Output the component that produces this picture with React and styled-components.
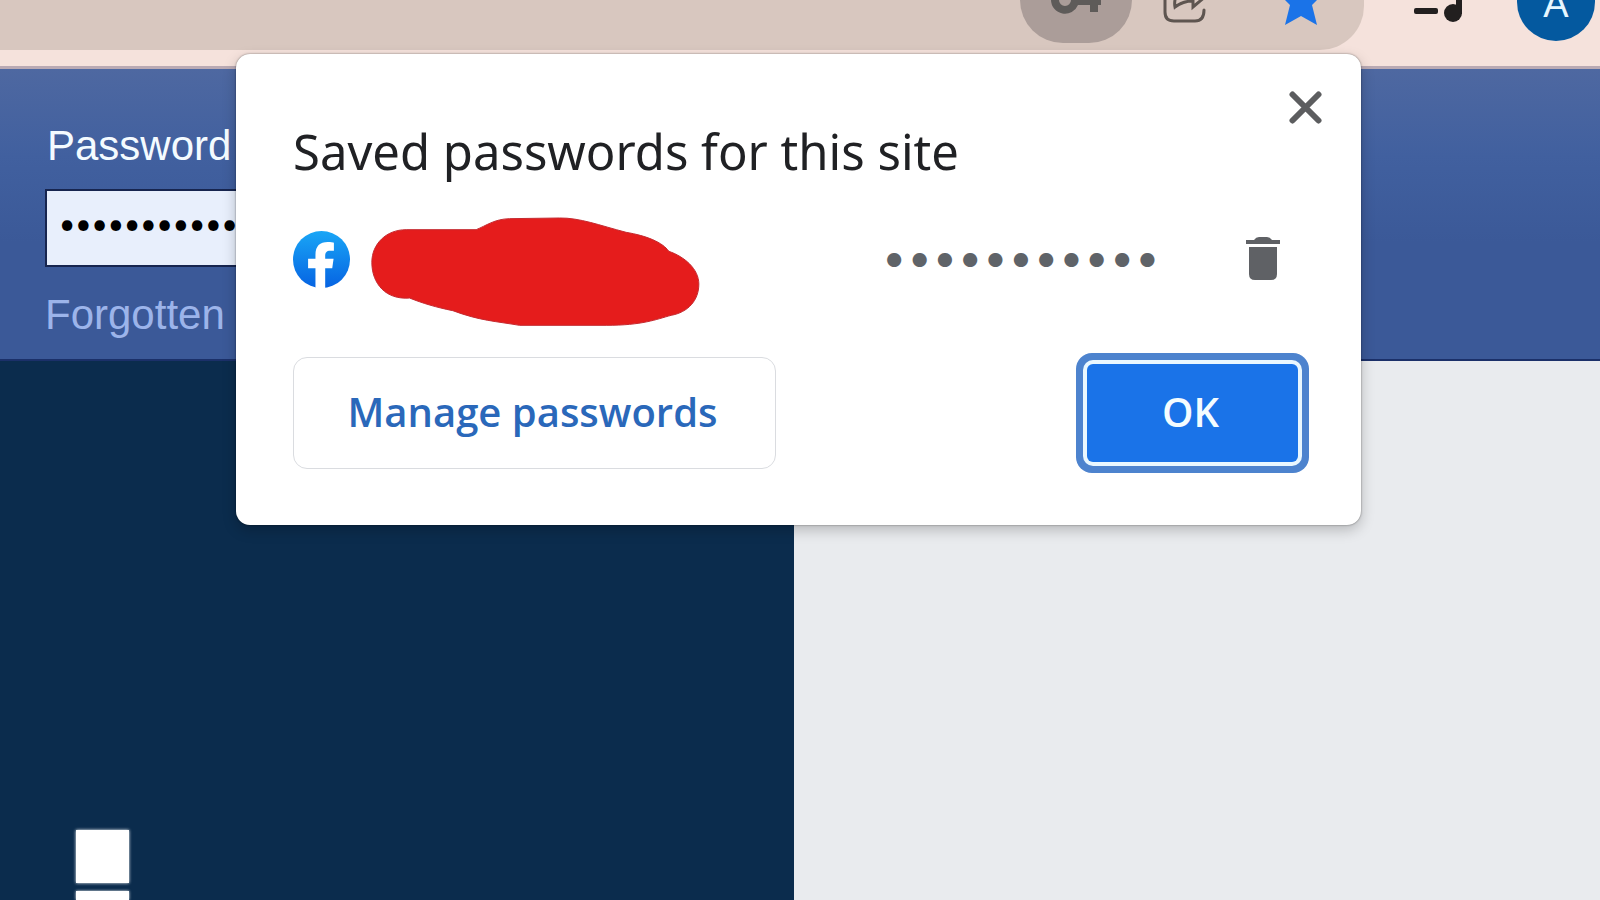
import React from "react";
import styled, { createGlobalStyle } from "styled-components";

const GlobalStyle = createGlobalStyle`
  *, *::before, *::after { box-sizing: border-box; }
  body { margin: 0; font-family: "Liberation Sans", Arial, sans-serif; }
  button { font: inherit; cursor: pointer; }
`;

const Page = styled.div`
  position: relative;
  display: flex;
  flex-direction: column;
  height: 100vh;
  overflow: hidden;
`;

const Toolbar = styled.header`
  display: flex;
  align-items: flex-start;
  height: 69px;
  flex: none;
  padding-right: 5px;
  background: #f5e2dc;
  border-bottom: 3px solid #b9a9b3;
`;

const Omnibox = styled.div`
  flex: 1;
  display: flex;
  justify-content: flex-end;
  align-items: flex-start;
  gap: 31px;
  height: 50px;
  padding-right: 42px;
  background: #d8c7bf;
  border-bottom-right-radius: 44px;
`;

const ToolButton = styled.button`
  display: block;
  padding: 0;
  border: 0;
  background: none;
  line-height: 0;
  margin-left: ${(p) => p.$space || 0}px;
`;

const KeyButton = styled(ToolButton)`
  display: flex;
  justify-content: center;
  width: 112px;
  height: 43px;
  background: #ab9d99;
  border-radius: 0 0 44px 44px;
`;

const Avatar = styled.button`
  display: flex;
  justify-content: center;
  width: 78px;
  height: 41px;
  margin-left: 54px;
  padding: 0;
  overflow: hidden;
  border: 0;
  border-radius: 0 0 39px 39px;
  background: #04599f;
  color: #e6f7ff;
  font-size: 38px;
  line-height: 8px;
`;

const SiteHeader = styled.section`
  display: flex;
  flex-direction: column;
  align-items: flex-start;
  flex: none;
  padding: 53px 45px 20px;
  background: linear-gradient(#4e68a1, #41609f 30%, #3b5998 60%);
  border-bottom: 2px solid #1b3069;
  font-size: 42px;
  line-height: 48px;
`;

const FieldLabel = styled.label`
  padding-left: 2px;
  color: #f4fbff;
`;

const PasswordField = styled.input`
  width: 400px;
  height: 78px;
  margin: 19px 0 24px;
  padding: 0 12px 10px;
  border: 2px solid #17254f;
  border-radius: 0;
  outline: 0;
  background: #e8effc;
  color: #000;
  font-family: Lato, sans-serif;
  font-size: 28px;
`;

const ForgottenLink = styled.a`
  color: #9cb4ea;
  text-decoration: none;
`;

const Content = styled.main`
  flex: 1;
  display: flex;
  min-height: 0;
  background: #e9ebee;
`;

const Banner = styled.div`
  display: flex;
  flex-direction: column;
  justify-content: flex-end;
  gap: 8px;
  width: calc(50% - 6px);
  padding-left: 76px;
  background: #0b2c4d;
`;

const Block = styled.div`
  width: 53px;
  height: ${(p) => p.$height}px;
  background: #fff;
  box-shadow: 0 0 3px #fff;
`;

const Dialog = styled.section`
  position: absolute;
  top: 54px;
  left: 236px;
  right: 239px;
  padding-bottom: 52px;
  background: #fff;
  border-radius: 14px;
  box-shadow: 0 0 2px rgba(0, 0, 0, 0.5), 0 5px 14px rgba(0, 0, 0, 0.22);
  font-family: "Noto Sans", "Open Sans", sans-serif;
`;

const DialogHeader = styled.div`
  display: flex;
  justify-content: space-between;
  align-items: flex-start;
  padding: 37px 39px 0 57px;
`;

const Title = styled.h1`
  margin: 29px 0 0;
  color: #202124;
  font-size: 49px;
  font-weight: 400;
  line-height: 62px;
`;

const Account = styled.div`
  display: flex;
  align-items: center;
  height: 84px;
  margin-top: 35px;
  padding: 0 81px 0 57px;
`;

const Redaction = styled.svg`
  align-self: flex-start;
  flex: none;
  margin-left: 21px;
`;

const SavedPassword = styled.span`
  margin-left: auto;
  padding-bottom: 4px;
  color: #5f6368;
  font-family: Inter, sans-serif;
  font-size: 45px;
  line-height: 48px;
`;

const DialogFooter = styled.div`
  display: flex;
  justify-content: space-between;
  align-items: center;
  margin-top: 52px;
  padding: 0 52px 0 57px;
  font-family: "Open Sans", "Noto Sans", sans-serif;
  font-size: 40px;
  font-weight: 600;
`;

const ManageButton = styled.button`
  width: 483px;
  height: 112px;
  padding: 0 4px 4px 0;
  border: 1px solid #dadce0;
  border-radius: 14px;
  background: #fff;
  color: #2a68ba;
`;

const OkButton = styled.button`
  width: 211px;
  height: 98px;
  margin: 11px;
  padding: 0 4px 4px 0;
  border: 0;
  border-radius: 6px;
  background: #1a73e8;
  color: #f4fcff;
  box-shadow: 0 0 0 4px #e9f7ff, 0 0 0 11px #4d83ce;
`;

function KeyIcon() {
  return (
    <svg width="56" height="16" viewBox="0 0 56 16" fill="#5e5b59" aria-hidden="true">
      <path fillRule="evenodd" d="M3 0a14 14 0 0 1 28 -4H53V5H50V12H42V5H30A14 14 0 0 1 3 0ZM11 0a6 6 0 0 0 12 0a6 6 0 0 0 -12 0Z" />
    </svg>
  );
}

function ShareIcon() {
  return (
    <svg width="43" height="24" viewBox="0 0 43 24" fill="none" stroke="#5e5550" strokeWidth="3" aria-hidden="true">
      <path d="M2 -10V12Q2 21 11 21H32Q41 21 41 10" strokeLinecap="round" />
      <path d="M13 -4Q11 2 12 7Q20 1 30 1V7L43 -4" />
    </svg>
  );
}

function StarIcon() {
  return (
    <svg width="42" height="27" viewBox="0 0 42 27" fill="#1a73e8" aria-hidden="true">
      <path d="M21 -19L27 -6L42 -5L32 5L37 25L21 16L5 25L10 5L0 -5L15 -6Z" />
    </svg>
  );
}

function MediaIcon() {
  return (
    <svg width="49" height="24" viewBox="0 0 49 24" fill="#221f1f" aria-hidden="true">
      <rect x="0" y="8" width="24" height="6" rx="2" />
      <circle cx="39" cy="13" r="9" />
      <rect x="42" y="-10" width="6" height="24" />
    </svg>
  );
}

function CloseIcon() {
  return (
    <svg width="33" height="33" viewBox="0 0 33 33" stroke="#5c5d5f" strokeWidth="6" strokeLinecap="round" aria-hidden="true">
      <path d="M3.500 3.500L29.500 29.500M29.500 3.500L3.500 29.500" />
    </svg>
  );
}

function FacebookIcon() {
  return (
    <svg width="57" height="57" viewBox="38 391 170 170" role="img" aria-label="Facebook">
      <defs>
        <linearGradient id="fb" x1="0" y1="0" x2="0" y2="1">
          <stop offset="0" stopColor="#19a6f6" />
          <stop offset="1" stopColor="#0663e2" />
        </linearGradient>
      </defs>
      <circle cx="123" cy="476" r="85" fill="url(#fb)" />
      <path fill="#fff" d="M105 562V502H83V474H105V462C105 436 118 424 142 424C151 424 160 426 160 426V450H149C138 450 134 456 134 465V474H159L155 502H134V562Z" />
    </svg>
  );
}

function TrashIcon() {
  return (
    <svg width="34" height="44" viewBox="0 0 34 44" fill="#5f6165" aria-hidden="true">
      <path d="M0 3H8Q10 0 13 0H21Q24 0 26 3H34V7H0Z" />
      <path d="M3 10H31V37Q31 43 25 43H9Q3 43 3 37Z" />
    </svg>
  );
}

export default function App() {
  return (
    <Page>
      <GlobalStyle />
      <Toolbar>
        <Omnibox>
          <KeyButton aria-label="Passwords"><KeyIcon /></KeyButton>
          <ToolButton aria-label="Share"><ShareIcon /></ToolButton>
          <ToolButton aria-label="Bookmark" $space={43}><StarIcon /></ToolButton>
        </Omnibox>
        <ToolButton aria-label="Media" $space={50}><MediaIcon /></ToolButton>
        <Avatar>A</Avatar>
      </Toolbar>
      <SiteHeader>
        <FieldLabel htmlFor="password">Password</FieldLabel>
        <PasswordField id="password" type="password" defaultValue="12345678901" />
        <ForgottenLink href="#forgotten">Forgotten</ForgottenLink>
      </SiteHeader>
      <Content>
        <Banner>
          <Block $height={53} />
          <Block $height={9} />
        </Banner>
      </Content>
      <Dialog role="dialog" aria-labelledby="dialog-title">
        <DialogHeader>
          <Title id="dialog-title">Saved passwords for this site</Title>
          <ToolButton aria-label="Close"><CloseIcon /></ToolButton>
        </DialogHeader>
        <Account>
          <FacebookIcon />
          <Redaction width="329" height="110" viewBox="275 349 986 330" aria-hidden="true">
            <path
              fill="#e51c1c"
              stroke="#c52a30"
              strokeWidth="3"
              d="M380 387L590 387C620 375 645 355 690 354L840 352C900 351 960 374 1040 395C1100 405 1150 425 1168 452C1215 468 1258 505 1258 550C1258 600 1225 635 1175 644C1130 656 1090 674 980 674L720 674C650 662 600 660 520 630C470 620 430 608 390 592C320 598 277 550 277 485C277 430 320 387 380 387Z"
            />
          </Redaction>
          <SavedPassword>•••••••••••</SavedPassword>
          <ToolButton aria-label="Delete" $space={86}><TrashIcon /></ToolButton>
        </Account>
        <DialogFooter>
          <ManageButton>Manage passwords</ManageButton>
          <OkButton>OK</OkButton>
        </DialogFooter>
      </Dialog>
    </Page>
  );
}
